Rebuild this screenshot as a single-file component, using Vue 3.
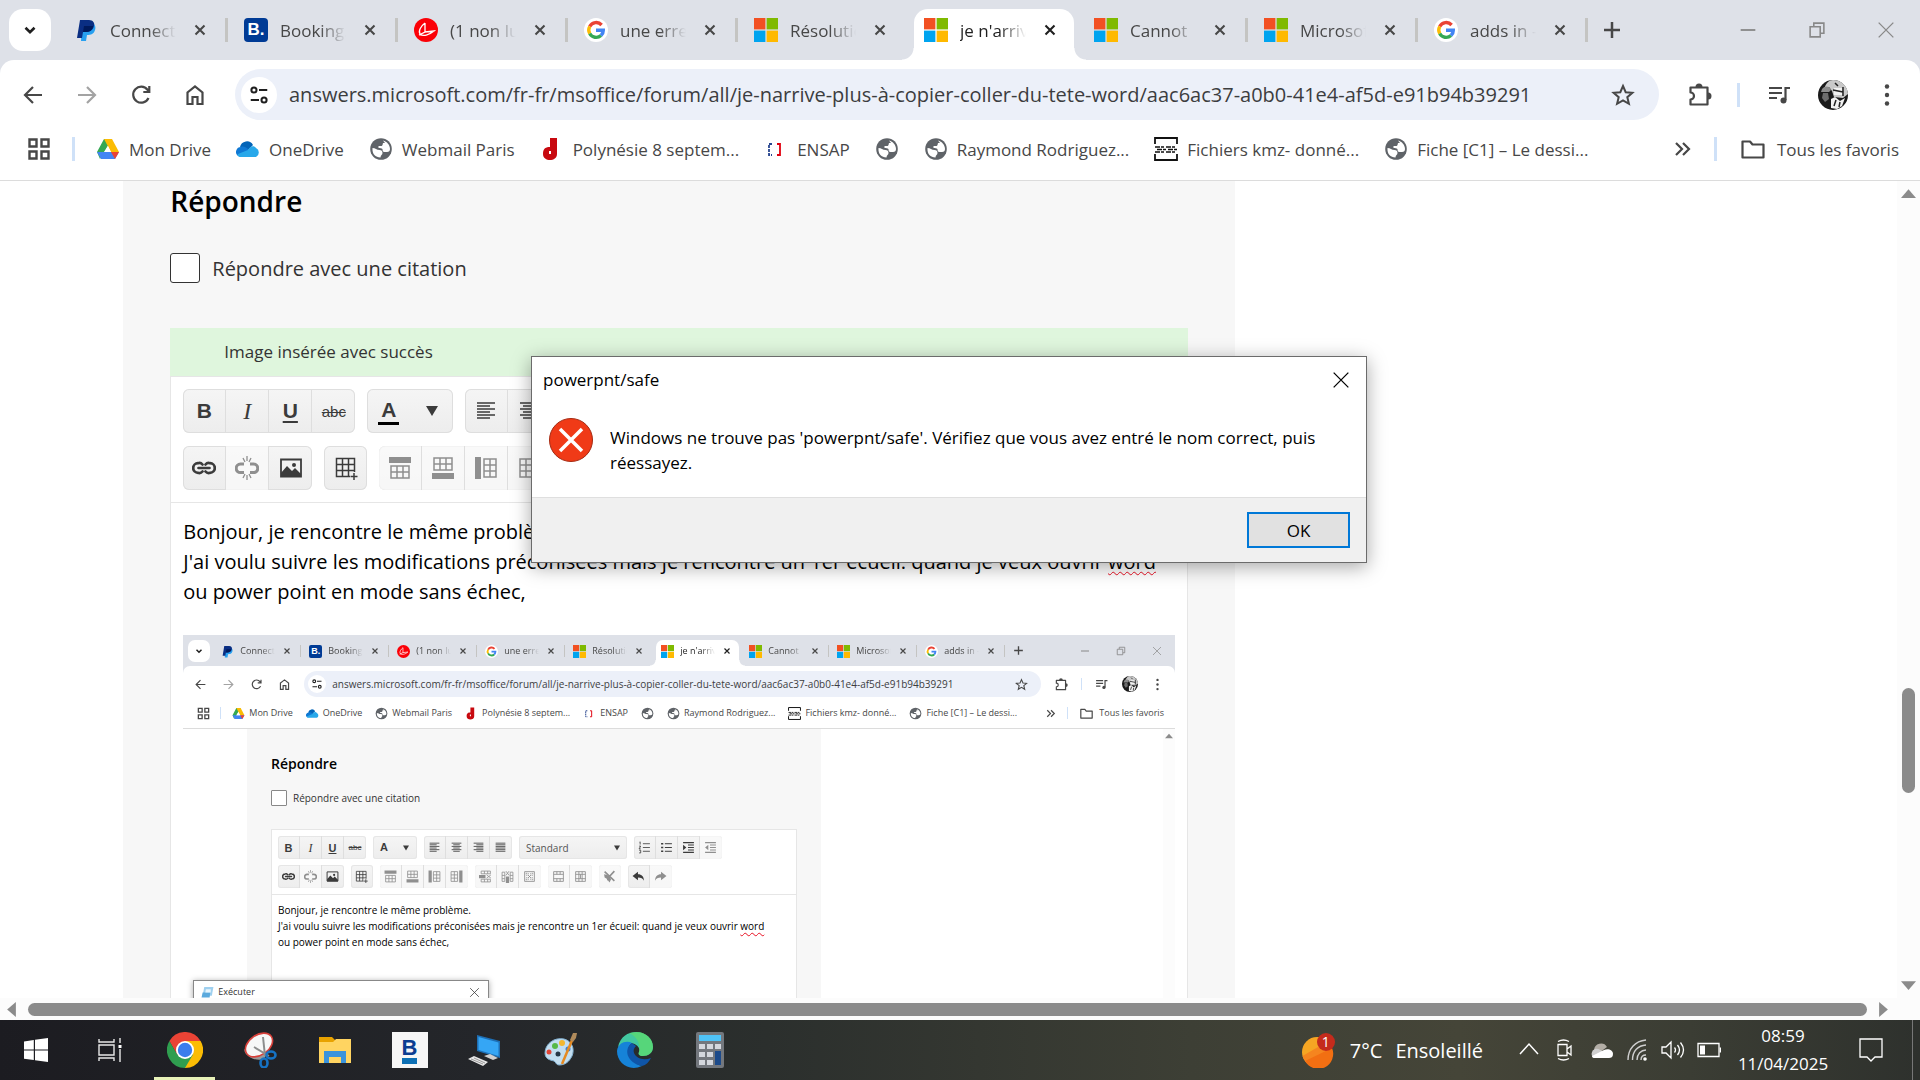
<script setup>
import { ref } from "vue";

// The picture inserted in the message is the same window, one size down.
defineOptions({ name: "App" });
defineProps({ mini: Boolean });

const url = ref(
  "answers.microsoft.com/fr-fr/msoffice/forum/all/je-narrive-plus-à-copier-coller-du-tete-word/aac6ac37-a0b0-41e4-af5d-e91b94b39291"
);
const quote = ref(false);
const style = ref("Standard");

const tabs = [
  { icon: "paypal", title: "Connect" },
  { icon: "booking", title: "Booking." },
  { icon: "red", title: "(1 non lu" },
  { icon: "google", title: "une erreu" },
  { icon: "ms", title: "Résolutio" },
  { icon: "ms", title: "je n'arrive", active: true },
  { icon: "ms", title: "Cannot " },
  { icon: "ms", title: "Microsof" },
  { icon: "google", title: "adds in -" },
];

const bookmarks = [
  { icon: "drive", title: "Mon Drive" },
  { icon: "onedrive", title: "OneDrive" },
  { icon: "globe", title: "Webmail Paris" },
  { icon: "dred", title: "Polynésie 8 septem..." },
  { icon: "ensap", title: "ENSAP" },
  { icon: "globe", title: "" },
  { icon: "globe", title: "Raymond Rodriguez..." },
  { icon: "kmz", title: "Fichiers kmz- donné..." },
  { icon: "globe", title: "Fiche [C1] – Le dessi..." },
];

const textTools = [
  { text: "B", cls: "bold", label: "Gras" },
  { text: "I", cls: "italic", label: "Italique" },
  { text: "U", cls: "under", label: "Souligné" },
  { text: "abc", cls: "strike", label: "Barré" },
];
const alignTools = ["al-left", "al-center", "al-right", "al-full"];
const listTools = [
  { icon: "ol" },
  { icon: "ul" },
  { icon: "indent" },
  { icon: "outdent", off: true },
];
const secondRow = [
  [{ icon: "link" }, { icon: "unlink", off: true }, { icon: "image" }],
  [{ icon: "table" }],
  [
    { icon: "row-top", off: true },
    { icon: "row-bottom", off: true },
    { icon: "col-left", off: true },
    { icon: "col-right", off: true },
  ],
  [
    { icon: "del-row", off: true },
    { icon: "del-col", off: true },
    { icon: "del-table", off: true },
  ],
  [{ icon: "merge", off: true }, { icon: "split", off: true }],
  [{ icon: "clean", off: true }],
  [{ icon: "undo" }, { icon: "redo", off: true }],
];

const apps = ["chrome", "snip", "explorer", "bapp", "pc", "paint", "edge", "calc"];
const tray = ["chevron", "camera", "cloud", "wifi", "volume", "battery"];
</script>

<template>
  <div class="screen" :class="{ mini }">
    <svg v-if="!mini" class="sprite" aria-hidden="true">
      <symbol id="down" viewBox="0 0 24 24"><path d="M6 9l6 6 6-6" fill="none" stroke="currentColor" stroke-width="3.5" /></symbol>
      <symbol id="close" viewBox="0 0 24 24"><path d="M6 6l12 12M18 6L6 18" stroke="currentColor" stroke-width="2.8" /></symbol>
      <symbol id="plus" viewBox="0 0 24 24"><path d="M12 4v16M4 12h16" stroke="currentColor" stroke-width="2.5" /></symbol>
      <symbol id="win-min" viewBox="0 0 24 24"><path d="M4 12h16" stroke="currentColor" stroke-width="2" /></symbol>
      <symbol id="win-max" viewBox="0 0 24 24"><path d="M4.5 8.5h11v11h-11zM8.5 8V4.5h11v11H16" fill="none" stroke="currentColor" stroke-width="1.7" /></symbol>
      <symbol id="win-close" viewBox="0 0 24 24"><path d="M4 4l16 16M20 4L4 20" stroke="currentColor" stroke-width="1.4" /></symbol>
      <symbol id="back" viewBox="0 0 24 24"><path d="M21 12H4M12 4l-8 8 8 8" fill="none" stroke="currentColor" stroke-width="2.2" /></symbol>
      <symbol id="forward" viewBox="0 0 24 24"><path d="M3 12h17M12 4l8 8-8 8" fill="none" stroke="currentColor" stroke-width="2.2" /></symbol>
      <symbol id="reload" viewBox="0 0 24 24"><path d="M19.5 15a8 8 0 1 1-1-8.300L20 8.500M20.3 3v6h-6" fill="none" stroke="currentColor" stroke-width="2.2" /></symbol>
      <symbol id="home" viewBox="0 0 24 24"><path d="M4.5 21V9.500L12 3.500l7.500 6V21h-5v-7h-5v7z" fill="none" stroke="currentColor" stroke-width="2.2" /></symbol>
      <symbol id="tune" viewBox="0 0 24 24"><g fill="none" stroke="currentColor" stroke-width="2.2"><circle cx="6.5" cy="6.5" r="2.8" /><path d="M12 6.5h9M3 17.5h9" /><circle cx="17.5" cy="17.5" r="2.8" /></g></symbol>
      <symbol id="star" viewBox="0 0 24 24"><path d="M12 3l2.7 6.200 6.700.6-5.100 4.400 1.600 6.600-5.900-3.500-5.900 3.500 1.600-6.600-5.100-4.400 6.700-.6z" fill="none" stroke="currentColor" stroke-width="2" /></symbol>
      <symbol id="ext" viewBox="0 0 24 24"><path d="M2.500 4.500h17v17h-17v-5a3.500 3.500 0 0 0 0-7z" fill="none" stroke="currentColor" stroke-width="2.200" stroke-linejoin="round" /><path d="M7.500 4a3.500 3.500 0 0 1 7 0zM20 9.500a3.500 3.500 0 0 1 0 7z" fill="currentColor" /></symbol>
      <symbol id="media" viewBox="0 0 24 24"><path d="M2 5h13M2 10h13M2 15h8M18.500 17V5H23" fill="none" stroke="currentColor" stroke-width="2.200" /><circle cx="16.500" cy="17.500" r="3" fill="currentColor" /></symbol>
      <symbol id="avatar" viewBox="0 0 30 30">
        <circle cx="15" cy="15" r="15" fill="#1a1a1a" />
        <path d="M15 0a15 15 0 0 1 15 14l-5 4-9-1-2-6-3-4-5 2C8 3 11 0 15 0z" fill="#c9c9c9" />
        <path d="M4 9c3-4 8-3 9 1l-2 2H3z" fill="#8c8c8c" /><path d="M5 13h5l1 6-4 3-3-4z" fill="#6d6d6d" />
        <path d="M16 8h8v7h-8zM13 19l4-2 5 4 5-3-3 8-5 3-6-1z" fill="#f2f2f2" /><path d="M17 3l3 3M25 7v9M18 20l-2 6M22 22l-1 5M15 10l10 2" stroke="#222" stroke-width="1.5" />
      </symbol>
      <symbol id="dots" viewBox="0 0 24 24"><g fill="currentColor"><circle cx="12" cy="3.5" r="2.2" /><circle cx="12" cy="12" r="2.2" /><circle cx="12" cy="20.5" r="2.2" /></g></symbol>
      <symbol id="grid" viewBox="0 0 24 24"><path d="M2.5 2.5h7v7h-7zM14.5 2.5h7v7h-7zM2.5 14.5h7v7h-7zM14.5 14.5h7v7h-7z" fill="none" stroke="currentColor" stroke-width="2.4" /></symbol>
      <symbol id="more" viewBox="0 0 24 24"><path d="M6 6l6 6-6 6M13 6l6 6-6 6" fill="none" stroke="currentColor" stroke-width="2.2" /></symbol>
      <symbol id="folder" viewBox="0 0 24 24"><path d="M1.5 4.5h7.500l2.500 3h11v13h-21z" fill="none" stroke="currentColor" stroke-width="2.2" stroke-linejoin="round" /></symbol>

      <symbol id="paypal" viewBox="0 0 24 24"><path d="M8 5h10c3 1 4 4 3 7-1 4-4 5-8 5l-1 6H7z" fill="#27a0f0" /><path d="M6 2h9c4 0 6 3 5 6-1 4-4 6-8 6H9l-1 6H3z" fill="#0a2e83" /><path d="M10 8h9c0 3-3 6-7 6H9z" fill="#001a5c" /></symbol>
      <symbol id="red" viewBox="0 0 24 24"><circle cx="12" cy="12" r="12" fill="#fb0007" /><path d="M11 5v9l-6 3M11 5c-4 3-7 8-5 11 3 3 9 1 14-3l-9 1" fill="none" stroke="#fff" stroke-width="1.3" /></symbol>
      <symbol id="google" viewBox="0 0 24 24">
        <circle cx="12" cy="12" r="12" fill="#fff" />
        <g fill="none" stroke-width="3.4"><path d="M17.6 7A7.300 7.300 0 0 0 5.700 8.500" stroke="#ea4335" /><path d="M5.7 8.500a7.300 7.300 0 0 0 0 7" stroke="#fbbc05" /><path d="M5.7 15.500a7.300 7.300 0 0 0 11.300 2" stroke="#34a853" /><path d="M17 17.5a7 7 0 0 0 2.300-5.300H12" stroke="#4285f4" /></g>
      </symbol>
      <symbol id="ms" viewBox="0 0 24 24"><path d="M0 0h11.4v11.400H0z" fill="#f25022" /><path d="M12.6 0H24v11.400H12.600z" fill="#7fba00" /><path d="M0 12.6h11.400V24H0z" fill="#00a4ef" /><path d="M12.6 12.600H24V24H12.600z" fill="#ffb900" /></symbol>
      <symbol id="drive" viewBox="0 0 24 24"><path d="M8 2h8l-8 13-4 7-3-7z" fill="#34a853" /><path d="M8 2h8l7 13h-8z" fill="#fbbc04" /><path d="M1 15l4 7h14l4-7z" fill="#4285f4" /><path d="M15 15h8l-4 7z" fill="#ea4335" /><path d="M12 9l3 6H8.500z" fill="#fff" /></symbol>
      <symbol id="onedrive" viewBox="0 0 24 24"><path d="M4 10a7 7 0 0 1 13-2l-6 6z" fill="#0364b8" /><path d="M2 19a5 5 0 0 1 3-9c2-1 5 0 7 2l5 6z" fill="#0f78d4" /><path d="M12 13c2-4 6-5 8-2a5 5 0 0 1 0 9H5c-3 0-4-2-3-3z" fill="#28a8ea" /></symbol>
      <symbol id="globe" viewBox="0 0 24 24"><circle cx="12" cy="12" r="10.8" fill="#5f6368" /><path d="M14 3.500c4 1 7 4.500 7 8.500 0 2-1 3-3 3h-2.500c-2 0-2-1.500-2-3-1-1-2.500-1-4-1V9h2.500c2 0 1.500-2 2-3h2zM3.500 11c3 0 4 2 7 2 2 0 3 1 3 3 0 2-2 2-2 4.500C6.500 20.500 3 17 3.500 11z" fill="#fff" /></symbol>
      <symbol id="dred" viewBox="0 0 24 24"><path d="M10 1h7v16c0 8-14 8-14 0 0-6 3-7 7-7z" fill="#c8090f" /><path d="M10 14v3" stroke="#fff" stroke-width="2" /></symbol>
      <symbol id="ensap" viewBox="0 0 24 24"><path d="M8 7H5v11h3" fill="none" stroke="#27458f" stroke-width="1.800" stroke-dasharray="3 1" /><path d="M13 7h3v11h-3" fill="none" stroke="#e1000f" stroke-width="1.800" /></symbol>
      <symbol id="kmz" viewBox="0 0 24 24"><path d="M1 7V1h22v6M1 17v6h22v-6" fill="none" stroke="#111" stroke-width="1.800" /><path d="M1 10h22M3 12.500h20M1 15h22" stroke="#111" stroke-width="1.600" stroke-dasharray="5 1 3 2" /></symbol>

      <symbol id="al-left" viewBox="0 0 24 24"><path d="M3 4h18M3 7h13M3 10h18M3 13h13M3 16h18M3 19h13" stroke="currentColor" stroke-width="1.5" /></symbol>
      <symbol id="al-center" viewBox="0 0 24 24"><path d="M3 4h18M6 7h12M3 10h18M6 13h12M3 16h18M6 19h12" stroke="currentColor" stroke-width="1.5" /></symbol>
      <symbol id="al-right" viewBox="0 0 24 24"><path d="M3 4h18M8 7h13M3 10h18M8 13h13M3 16h18M8 19h13" stroke="currentColor" stroke-width="1.5" /></symbol>
      <symbol id="al-full" viewBox="0 0 24 24"><path d="M3 4h18M3 7h18M3 10h18M3 13h18M3 16h18M3 19h18" stroke="currentColor" stroke-width="1.5" /></symbol>
      <symbol id="ol" viewBox="0 0 24 24"><path d="M9 5h13M9 12h13M9 19h13M3 2l1-.5v5M2 9.500h3l-3 5h3M2 17h3v5H2" fill="none" stroke="currentColor" stroke-width="1.5" /></symbol>
      <symbol id="ul" viewBox="0 0 24 24"><path d="M9 5h13M9 12h13M9 19h13" stroke="currentColor" stroke-width="1.8" /><path d="M2 3.500h4v3H2zM2 10.500h4v3H2zM2 17.500h4v3H2z" fill="currentColor" /></symbol>
      <symbol id="indent" viewBox="0 0 24 24"><path d="M2 3h20M11 7.500h11M11 12h11M11 16.500h11M2 21h20" stroke="currentColor" stroke-width="2" /><path d="M2 7l6 5-6 5z" fill="currentColor" /></symbol>
      <symbol id="outdent" viewBox="0 0 24 24"><path d="M2 3h20M11 7.500h11M11 12h11M11 16.500h11M2 21h20" stroke="currentColor" stroke-width="2" /><path d="M8 7l-6 5 6 5z" fill="currentColor" /></symbol>
      <symbol id="link" viewBox="0 0 24 24"><path d="M10.5 8.500A4.200 4.200 0 0 0 6 7.200a4.800 4.800 0 0 0 0 9.600 4.200 4.200 0 0 0 4.500-1.300M13.500 8.500A4.200 4.200 0 0 1 18 7.200a4.800 4.800 0 0 1 0 9.600 4.200 4.200 0 0 1-4.500-1.300M6.500 12h11" fill="none" stroke="currentColor" stroke-width="2.700" stroke-linecap="round" /></symbol>
      <symbol id="unlink" viewBox="0 0 24 24"><path d="M9 8H5.500a4.300 4.300 0 0 0 0 8.600H9M15 8h3.500a4.300 4.300 0 0 1 0 8.600H15" fill="none" stroke="currentColor" stroke-width="3" /><path d="M12 0v5M8 2l2 4M16 2l-2 4M12 24v-5M8 22l2-4M16 22l-2-4" stroke="currentColor" stroke-width="1.3" /></symbol>
      <symbol id="image" viewBox="0 0 24 24"><path d="M2 3.500h20v17H2z" fill="none" stroke="currentColor" stroke-width="1.8" /><path d="M2 17l6-7 5 5 3-3 6 6v3H2z" fill="currentColor" /><circle cx="15" cy="9" r="2" fill="currentColor" /></symbol>
      <symbol id="table" viewBox="0 0 24 24"><path d="M2.5 2.5h18v18h-18zM8.5 2.5v18M14.5 2.5v18M2.5 8.5h18M2.5 14.5h18" fill="none" stroke="currentColor" stroke-width="1.5" /><path d="M16 16h8v8h-8z" fill="#f0f0f0" /><path d="M20 17v7M16.5 20.500h7" stroke="currentColor" stroke-width="1.5" /></symbol>
      <symbol id="row-top" viewBox="0 0 24 24"><path d="M1 1h22v6H1z" fill="currentColor" /><path d="M3 10h18v12H3zM3 16h18M9 10v12M15 10v12" fill="none" stroke="currentColor" stroke-width="1.5" /></symbol>
      <symbol id="row-bottom" viewBox="0 0 24 24"><path d="M1 17h22v6H1z" fill="currentColor" /><path d="M3 2h18v12H3zM3 8h18M9 2v12M15 2v12" fill="none" stroke="currentColor" stroke-width="1.5" /></symbol>
      <symbol id="col-left" viewBox="0 0 24 24"><path d="M1 1h6v22H1z" fill="currentColor" /><path d="M10 3h12v18H10zM16 3v18M10 9h12M10 15h12" fill="none" stroke="currentColor" stroke-width="1.5" /></symbol>
      <symbol id="col-right" viewBox="0 0 24 24"><path d="M17 1h6v22h-6z" fill="currentColor" /><path d="M2 3h12v18H2zM8 3v18M2 9h12M2 15h12" fill="none" stroke="currentColor" stroke-width="1.5" /></symbol>
      <symbol id="del-row" viewBox="0 0 24 24"><path d="M0 9h12v6H0z" fill="currentColor" /><path d="M4 2h17v5H4zM4 17h17v5H4zM10 2v5M16 2v5M10 17v5M16 17v5M14 9l8 6M22 9l-8 6" fill="none" stroke="currentColor" stroke-width="1.5" /></symbol>
      <symbol id="del-col" viewBox="0 0 24 24"><path d="M9 12h6v12H9z" fill="currentColor" /><path d="M2 4h5v17H2zM17 4h5v17h-5zM2 10h5M2 16h5M17 10h5M17 16h5M9 2l6 8M15 2l-6 8" fill="none" stroke="currentColor" stroke-width="1.5" /></symbol>
      <symbol id="del-table" viewBox="0 0 24 24"><path d="M3 3h18v18H3zM9 9l6 6M15 9l-6 6" fill="none" stroke="currentColor" stroke-width="1.6" /><path d="M7 5v14M17 5v14M5 7h14M5 17h14" stroke="currentColor" stroke-width="1.5" stroke-dasharray="2 2" /></symbol>
      <symbol id="merge" viewBox="0 0 24 24"><path d="M3 3h18v18H3zM3 8h18M3 16h18M9 3v5M15 3v5M9 16v5M15 16v5" fill="none" stroke="currentColor" stroke-width="1.6" /></symbol>
      <symbol id="split" viewBox="0 0 24 24"><path d="M3 3h18v18H3zM3 8h18M3 16h18M9 3v18M15 3v18M12 8v8" fill="none" stroke="currentColor" stroke-width="1.6" /></symbol>
      <symbol id="clean" viewBox="0 0 24 24"><path d="M2 8l6 1 4 3 3 5-3 6-3-4-1 1-1-4-4-2z" fill="currentColor" /><path d="M11 13L21 2M3 3l18 17" stroke="currentColor" stroke-width="3" /></symbol>
      <symbol id="undo" viewBox="0 0 24 24"><path d="M1 11l10-8v5c7 0 11 4 11 12-2-4-5-6-11-6v5z" fill="currentColor" /></symbol>
      <symbol id="redo" viewBox="0 0 24 24"><path d="M23 11L13 3v5C6 8 2 12 2 20c2-4 5-6 11-6v5z" fill="currentColor" /></symbol>
      <symbol id="caret" viewBox="0 0 24 24"><path d="M0 2h24L12 22z" fill="currentColor" /></symbol>
      <symbol id="arrow" viewBox="0 0 24 24"><path d="M0 5h24L12 19z" fill="currentColor" /></symbol>

      <symbol id="start" viewBox="0 0 24 24"><path d="M0 3.400l9.800-1.400v9.500H0zM11 1.800L24 0v11.500H11zM0 12.600h9.800V22L0 20.700zM11 12.600h13V24l-13-1.800z" fill="#fff" /></symbol>
      <symbol id="taskview" viewBox="0 0 24 24"><path d="M1 1v3h15V1M1 23v-3h15v3M1 7h15v10H1zM22 0v5M22 11v13" fill="none" stroke="#e8e8e8" stroke-width="1.4" /><path d="M20.5 7h3v3h-3z" fill="#fff" /></symbol>
      <symbol id="chrome" viewBox="0 0 36 36"><path d="M18 18L2.400 9A18 18 0 0 1 33.600 9z" fill="#ea4335" /><path d="M18 18l15.600-9A18 18 0 0 1 18 36z" fill="#fbbc04" /><path d="M18 9h15.600L26 22z" fill="#fbbc04" /><path d="M10 22.500L2.400 9 18 9z" fill="#ea4335" /><path d="M10.200 22.500L2.400 9A18 18 0 0 0 18 36l8-13.500z" fill="#2f9e4f" /><circle cx="18" cy="18" r="9" fill="#fff" /><circle cx="18" cy="18" r="7.200" fill="#3b7ded" /></symbol>
      <symbol id="snip" viewBox="0 0 36 36"><ellipse cx="13" cy="21" rx="11" ry="6" fill="#9a9a9a" transform="rotate(20 13 21)" /><ellipse cx="17" cy="13" rx="15" ry="10" fill="#f7f7f7" stroke="#d8403a" stroke-width="1.6" transform="rotate(-35 17 13)" /><path d="M21 5l2 19M12 15l15 9" stroke="#8d8d8d" stroke-width="2" /><g fill="none" stroke="#1673c5" stroke-width="2.6"><ellipse cx="29" cy="23" rx="4.500" ry="3.500" /><ellipse cx="22" cy="31" rx="3.500" ry="4.500" /></g></symbol>
      <symbol id="explorer" viewBox="0 0 36 36"><path d="M2 5h13l3 3v6H2z" fill="#e8a200" /><path d="M2 10h14l3-3h15v24H2z" fill="#ffd461" /><path d="M7 31V19h22v12h-5v-6H12v6z" fill="#3a93dc" /></symbol>
      <symbol id="pc" viewBox="0 0 36 36"><path d="M10 3l23 6v17l-23-7z" fill="#1e6fb5" /><path d="M11.5 5l20 5.500v13.500l-20-6z" fill="#35a6f5" /><path d="M17 24l6-2 8 4-5 2z" fill="#cfcfcf" /><path d="M1 27l6-3 14 6-5 4z" fill="#e8e8e8" /><path d="M4 27l12 5M7 26l11 5" stroke="#999" /></symbol>
      <symbol id="paint" viewBox="0 0 36 36"><path d="M3 21C3 12 12 5 22 7c8 2 11 10 8 17-3 6-7 9-13 9-3 0-3-3-5-4-4-1-9-2-9-8z" fill="#c3def0" stroke="#84b3d4" /><circle cx="13" cy="14" r="3" fill="#56b947" /><circle cx="20" cy="11" r="3" fill="#f3b72f" /><circle cx="7" cy="20" r="2.5" fill="#e24536" /><circle cx="26" cy="17" r="2.5" fill="#3a7fd0" /><circle cx="16" cy="22" r="2.5" fill="#263746" /><path d="M31 6L20 32" stroke="#e58a22" stroke-width="2.5" /><path d="M28 8l3-7h4l-1 5-3 4z" fill="#b08b5b" /></symbol>
      <symbol id="edge" viewBox="0 0 36 36"><path d="M1 15C3 5 11 0 19 0c10 0 17 7 17 15 0 6-5 9-10 9-4 0-5-2-4-4 3-6-9-14-21-5z" fill="#42c8a0" /><path d="M20 0c9 0 16 7 16 15 0 6-5 9-10 9-4 0-5-2-4-4 2-9-3-16-10-19z" fill="#5fdc6a" opacity=".7" /><path d="M0 19C1 11 9 8 15 11c-4 3-5 8-2 14 3 5 8 8 12 9C12 40 0 31 0 19z" fill="#1683d8" /><path d="M15 11c-9 6-5 20 10 23 4-1 7-4 9-8-8 3-15 0-17-5-1-3 0-5 2-7z" fill="#0f55a8" /></symbol>
      <symbol id="calc" viewBox="0 0 36 36"><rect x="4" width="28" height="36" rx="2" fill="#73777d" /><path d="M7 3h22v6H7z" fill="#4fc3f7" /><path d="M7 12h6v5H7zM15 12h6v5h-6zM23 12h6v5h-6zM7 20h6v5H7zM15 20h6v5h-6zM7 28h6v5H7zM15 28h6v5h-6z" fill="#d4d7dd" /><path d="M23 19h6v14h-6z" fill="#1c4a8a" /></symbol>

      <symbol id="sun" viewBox="0 0 36 36"><circle cx="16" cy="20" r="15" fill="#f6a623" /><path d="M1.5 24L26.500 9.500a15 15 0 0 1-4 24A15 15 0 0 1 1.500 24z" fill="#f5851f" /><path d="M4 29l27-13a15 15 0 0 1-27 13z" fill="#f26f12" /></symbol>
      <symbol id="chevron" viewBox="0 0 24 24"><path d="M3 16l9-10 9 10" fill="none" stroke="#fff" stroke-width="1.5" /></symbol>
      <symbol id="camera" viewBox="0 0 24 24"><path d="M5 6.500h9v11H5zM14 11l4-3v9l-4-3M5 3.500q5.500-3 11 0M5 20.500q5.500 3 11 0" fill="none" stroke="#fff" stroke-width="1.3" /></symbol>
      <symbol id="cloud" viewBox="0 0 24 24"><path d="M5 12a7 7 0 0 1 13-3l-8 6z" fill="#b3aea6" /><path d="M5 20a5 5 0 0 1 1-9c3-1 6 1 9 4l3 5z" fill="#cfcfcf" /><path d="M3 18l12-6c4-2 9 0 9 4 0 3-2 4-4 4H5c-1 0-2-1-2-2z" fill="#fff" /></symbol>
      <symbol id="wifi" viewBox="0 0 24 24"><g fill="none" stroke="#cfcfcf" stroke-width="1.4"><path d="M3 22C3 11 10 3 21 2" /><path d="M7.5 22C7.500 13 13 7.500 21 7" /><path d="M12 22c0-6 4-10 9-10" /><path d="M16 22c0-3 2-5 5-5" /></g><circle cx="20" cy="21" r="1.8" fill="#fff" /></symbol>
      <symbol id="volume" viewBox="0 0 24 24"><path d="M1 9h4l5-5v16l-5-5H1zM13.500 9.500q2 2.500 0 5M16.500 7q4 5 0 10M19.500 4.500q6 7.500 0 15" fill="none" stroke="#fff" stroke-width="1.3" /></symbol>
      <symbol id="battery" viewBox="0 0 24 24"><path d="M1 5.500h21v13H1zM23.500 9.500v5" fill="none" stroke="#fff" stroke-width="1.3" /><path d="M3 7.500h5v9H3z" fill="#fff" /></symbol>
      <symbol id="notif" viewBox="0 0 24 24"><path d="M1 1h22v18h-7l-4 4-4-4H1z" fill="none" stroke="#fff" stroke-width="1.3" /></symbol>
      <symbol id="run" viewBox="0 0 24 24"><path d="M6 2h17l-3 16H3z" fill="#9fd0ef" /><path d="M3 12h14l-1 9H1z" fill="#5aa9dd" /><path d="M9 6h9v6H8z" fill="#e7f5fd" /></symbol>
    </svg>

    <header class="browser">
      <div class="strip">
        <button class="tab-search" aria-label="Rechercher dans les onglets"><svg><use href="#down" /></svg></button>
        <nav class="tabs">
          <div v-for="(t, i) in tabs" :key="i" class="tab" :class="{ active: t.active, nosep: i === 4 }">
            <span v-if="t.icon === 'booking'" class="fav booking">B.</span>
            <svg v-else class="fav"><use :href="'#' + t.icon" /></svg>
            <span class="tab-title">{{ t.title }}</span>
            <button class="tab-close" aria-label="Fermer"><svg><use href="#close" /></svg></button>
          </div>
        </nav>
        <button class="new-tab" aria-label="Nouvel onglet"><svg><use href="#plus" /></svg></button>
        <div class="win-controls">
          <button v-for="c in ['win-min', 'win-max', 'win-close']" :key="c" :aria-label="c">
            <svg><use :href="'#' + c" /></svg>
          </button>
        </div>
      </div>

      <div class="nav-bar">
        <button v-for="n in ['back', 'forward', 'reload', 'home']" :key="n" class="nav-btn" :class="n" :aria-label="n">
          <svg><use :href="'#' + n" /></svg>
        </button>
        <div class="omnibox">
          <button class="site-info" aria-label="Informations sur le site"><svg><use href="#tune" /></svg></button>
          <input v-model="url" class="url" aria-label="Adresse" />
          <button class="star" aria-label="Favori"><svg><use href="#star" /></svg></button>
        </div>
        <button class="nav-btn ext" aria-label="Extensions"><svg><use href="#ext" /></svg></button>
        <i class="bar"></i>
        <button class="nav-btn" aria-label="Média"><svg><use href="#media" /></svg></button>
        <button class="nav-btn avatar" aria-label="Profil"><svg><use href="#avatar" /></svg></button>
        <button class="nav-btn" aria-label="Menu"><svg><use href="#dots" /></svg></button>
      </div>

      <div class="favorites">
        <button class="apps-btn" aria-label="Applications"><svg><use href="#grid" /></svg></button>
        <i class="bar"></i>
        <nav class="links">
          <a v-for="(b, i) in bookmarks" :key="i" href="#">
            <svg><use :href="'#' + b.icon" /></svg>
            <span v-if="b.title">{{ b.title }}</span>
          </a>
        </nav>
        <button class="more" aria-label="Plus"><svg><use href="#more" /></svg></button>
        <i class="bar"></i>
        <a class="all" href="#"><svg><use href="#folder" /></svg><span>Tous les favoris</span></a>
      </div>
    </header>

    <div class="viewport">
      <main class="page">
        <section class="reply">
          <h2>Répondre</h2>
          <label class="quote"><input v-model="quote" type="checkbox" />Répondre avec une citation</label>
          <p v-if="!mini" class="notice">Image insérée avec succès</p>
          <div class="editor">
            <div class="tools">
              <div class="row">
                <div class="group">
                  <button v-for="t in textTools" :key="t.text" :aria-label="t.label"><span :class="t.cls">{{ t.text }}</span></button>
                </div>
                <div class="group">
                  <button class="flat"><span class="color">A</span></button>
                  <button class="flat" aria-label="Couleur"><svg class="caret"><use href="#caret" /></svg></button>
                </div>
                <div class="group">
                  <button v-for="a in alignTools" :key="a" :aria-label="a"><svg><use :href="'#' + a" /></svg></button>
                </div>
                <div class="group select">
                  <select v-model="style" aria-label="Style">
                    <option>Standard</option>
                  </select>
                  <svg class="caret"><use href="#caret" /></svg>
                </div>
                <div class="group">
                  <button v-for="l in listTools" :key="l.icon" :disabled="l.off" :aria-label="l.icon"><svg><use :href="'#' + l.icon" /></svg></button>
                </div>
              </div>
              <div class="row">
                <div v-for="(g, i) in secondRow" :key="i" class="group">
                  <button v-for="l in g" :key="l.icon" :disabled="l.off" :aria-label="l.icon"><svg><use :href="'#' + l.icon" /></svg></button>
                </div>
              </div>
            </div>
            <div class="message">
              <p>
                Bonjour, je rencontre le même problème.<br />
                J'ai voulu suivre les modifications préconisées mais je rencontre un 1er écueil: quand je veux ouvrir <span class="typo">word</span><br />
                ou power point en mode sans échec,
              </p>
              <App v-if="!mini" mini />
            </div>
          </div>
        </section>
      </main>
      <div class="vscroll">
        <svg class="arrow"><use href="#arrow" /></svg>
        <i v-if="!mini" class="thumb"></i>
        <svg v-if="!mini" class="arrow"><use href="#arrow" /></svg>
      </div>
    </div>

    <div v-if="mini" class="run-box">
      <svg><use href="#run" /></svg>
      <span>Exécuter</span>
      <button aria-label="Fermer"><svg><use href="#win-close" /></svg></button>
    </div>

    <template v-else>
      <div class="hscroll">
        <svg class="arrow left"><use href="#arrow" /></svg>
        <i class="thumb"></i>
        <svg class="arrow right"><use href="#arrow" /></svg>
      </div>

      <footer class="taskbar">
        <button class="task start" aria-label="Démarrer"><svg><use href="#start" /></svg></button>
        <button class="task small" aria-label="Affichage des tâches"><svg><use href="#taskview" /></svg></button>
        <button v-for="a in apps" :key="a" class="task" :class="{ running: a === 'chrome' }" :aria-label="a">
          <span v-if="a === 'bapp'" class="bapp">B</span>
          <svg v-else><use :href="'#' + a" /></svg>
        </button>
        <div class="weather">
          <div class="sun"><svg><use href="#sun" /></svg><b>1</b></div>
          <span>7°C</span>
          <span>Ensoleillé</span>
        </div>
        <div class="tray">
          <button v-for="t in tray" :key="t" :aria-label="t"><svg><use :href="'#' + t" /></svg></button>
        </div>
        <div class="clock"><span>08:59</span><span>11/04/2025</span></div>
        <button class="notif" aria-label="Notifications"><svg><use href="#notif" /></svg></button>
      </footer>

      <div class="dialog" role="alertdialog" aria-label="powerpnt/safe">
        <div class="dialog-title">
          <span>powerpnt/safe</span>
          <button aria-label="Fermer"><svg><use href="#win-close" /></svg></button>
        </div>
        <div class="dialog-body">
          <svg viewBox="0 0 44 44">
            <circle cx="22" cy="22" r="21.5" fill="#f03a17" stroke="#a52a12" />
            <path d="M11 11l22 22M33 11L11 33" stroke="#fff" stroke-width="3.5" />
          </svg>
          <p>Windows ne trouve pas 'powerpnt/safe'. Vérifiez que vous avez entré le nom correct, puis réessayez.</p>
        </div>
        <div class="dialog-foot"><button>OK</button></div>
      </div>
    </template>
  </div>
</template>

<style>
body {
  margin: 0;
  overflow: hidden;
}
</style>

<style scoped>
.screen {
  --strip: 60px;
  --round: 42px;
  --tab: 170px;
  --tab-pad: 16px;
  --fav: 24px;
  --gap: 12px;
  --glyph: 18px;
  --nav: 54px;
  --nav-icon: 24px;
  --box: 51px;
  --info: 36px;
  --fs: 17px;
  --fs-url: 20px;
  --link-gap: 25px;
  --link-icon-gap: 9px;
  --bar: 3px;
  --bar-h: 24px;
  --radius: 14px;
  --foot: 12px;
  --head: 28px;
  --head-lh: 40px;
  --page-top: 0px;
  --check: 30px;
  --fs-label: 20px;
  --inset: 47px;
  --btn: 43px;
  --btn-h: 44px;
  --btn-icon: 24px;
  --fs-msg: 20px;
  --lh-msg: 30px;
  --scroll: 23px;
  position: relative;
  display: flex;
  flex-direction: column;
  height: 100vh;
  overflow: hidden;
  background: #fff;
  color: #000;
  font-family: "Open Sans", "Noto Sans", sans-serif;
  font-size: var(--fs);
}
.screen.mini {
  --strip: 31px;
  --round: 22px;
  --tab: 88px;
  --tab-pad: 8px;
  --fav: 13px;
  --gap: 6px;
  --glyph: 10px;
  --nav: 28px;
  --nav-icon: 13px;
  --box: 26px;
  --info: 18px;
  --fs: 9px;
  --fs-url: 10px;
  --link-gap: 13px;
  --link-icon-gap: 4px;
  --bar: 1px;
  --bar-h: 12px;
  --radius: 7px;
  --foot: 6px;
  --head: 14px;
  --head-lh: 20px;
  --page-top: 25px;
  --check: 16px;
  --fs-label: 10px;
  --inset: 24px;
  --btn: 22px;
  --btn-h: 23px;
  --btn-icon: 13px;
  --fs-msg: 10px;
  --lh-msg: 16px;
  --scroll: 12px;
  height: 558px;
}
.sprite {
  position: absolute;
  width: 0;
  height: 0;
}
* {
  box-sizing: border-box;
}
button {
  display: flex;
  align-items: center;
  justify-content: center;
  flex: none;
  padding: 0;
  border: 0;
  background: none;
  color: inherit;
  font: inherit;
}
svg {
  display: block;
  flex: none;
  width: var(--nav-icon);
  height: var(--nav-icon);
}
a {
  color: inherit;
  text-decoration: none;
}

/* tab strip */
.browser {
  flex: none;
  color: #474747;
  border-bottom: 1px solid #dcdcdc;
  background: #dee1e8;
}
.strip {
  display: flex;
  align-items: center;
  height: var(--strip);
  padding-left: 9px;
}
.mini .strip {
  padding-left: 5px;
}
.tab-search {
  width: var(--round);
  height: var(--round);
  border-radius: var(--radius);
  background: #fff;
  color: #1f1f1f;
}
.tab-search svg,
.tab-close svg {
  width: var(--glyph);
  height: var(--glyph);
}
.tabs {
  display: flex;
  align-self: stretch;
  align-items: flex-end;
  margin-left: 7px;
}
.mini .tabs {
  margin-left: 3px;
}
.tab {
  position: relative;
  display: flex;
  align-items: center;
  width: var(--tab);
  height: var(--box);
  padding: 0 var(--tab-pad) 9px;
}
.mini .tab {
  padding-bottom: 4px;
}
.tab::after {
  content: "";
  position: absolute;
  right: 0;
  width: var(--bar);
  height: var(--bar-h);
  background: #c4c4c2;
}
.tab.nosep::after {
  display: none;
}
.tab.active {
  isolation: isolate;
  color: #1f1f1f;
}
.tab.active::before {
  content: "";
  position: absolute;
  z-index: -1;
  inset: 0 4px 0 6px;
  border-radius: var(--radius) var(--radius) 0 0;
  background: #fff;
}
.mini .tab.active::before {
  inset: 0 2px 0 3px;
}
/* rounded feet that join the tab to the toolbar */
.tab.active::after {
  z-index: -1;
  right: calc(4px - var(--foot));
  bottom: 0;
  left: calc(6px - var(--foot));
  width: auto;
  height: var(--foot);
  background: radial-gradient(circle at 0 0, transparent calc(var(--foot) - 1px), #fff var(--foot)) left / var(--foot) 100% no-repeat,
    radial-gradient(circle at 100% 0, transparent calc(var(--foot) - 1px), #fff var(--foot)) right / var(--foot) 100% no-repeat;
}
.mini .tab.active::after {
  right: calc(2px - var(--foot));
  left: calc(3px - var(--foot));
}
.fav {
  flex: none;
  width: var(--fav);
  height: var(--fav);
}
.booking {
  border-radius: 4px;
  background: #003b95;
  color: #fff;
  font-family: "Liberation Sans", sans-serif;
  font-size: var(--fs);
  font-weight: 700;
  line-height: var(--fav);
  text-align: center;
}
.mini .booking {
  border-radius: 2px;
}
.tab-title {
  flex: 1;
  margin-left: var(--gap);
  margin-right: var(--gap);
  overflow: hidden;
  white-space: nowrap;
  mask-image: linear-gradient(90deg, #000 60%, transparent);
}
.tab-close {
  width: 24px;
}
.mini .tab-close {
  width: 12px;
}
.new-tab {
  width: 48px;
}
.mini .new-tab {
  width: 26px;
}
.win-controls {
  display: flex;
  margin-left: auto;
  color: #888;
}
.win-controls button {
  width: 69px;
}
.win-controls svg {
  width: 22px;
  height: 22px;
}
.mini .win-controls button {
  width: 36px;
}
.mini .win-controls svg {
  width: 12px;
  height: 12px;
}

/* address bar */
.nav-bar {
  display: flex;
  align-items: center;
  height: 69px;
  padding: 0 6px;
  border-radius: var(--radius) var(--radius) 0 0;
  background: #fff;
}
.mini .nav-bar {
  height: 36px;
  padding: 0 3px;
}
.nav-btn {
  width: var(--nav);
}
.nav-btn.forward {
  color: #a3a3a3;
}
.nav-btn.ext {
  margin-right: 10px;
}
.nav-btn.avatar svg {
  width: 30px;
  height: 30px;
}
.mini .nav-btn.avatar svg {
  width: 16px;
  height: 16px;
}
.omnibox {
  display: flex;
  flex: 1;
  align-items: center;
  height: var(--box);
  margin: 0 14px 0 13px;
  padding: 0 9px 0 6px;
  border-radius: 26px;
  background: #ecf0f9;
}
.mini .omnibox {
  margin: 0 7px 0 6px;
  padding: 0 5px 0 4px;
}
.site-info {
  width: var(--info);
  height: var(--info);
  border-radius: 50%;
  background: #fff;
  color: #1f1f1f;
}
.site-info svg {
  width: 22px;
  height: 22px;
}
.mini .site-info svg {
  width: 12px;
  height: 12px;
}
.url {
  flex: 1;
  min-width: 0;
  margin-left: var(--gap);
  padding: 0;
  border: 0;
  background: none;
  color: #3c3d3f;
  font: inherit;
  font-size: var(--fs-url);
  outline: none;
}
.star {
  width: var(--nav);
}
.bar {
  flex: none;
  width: var(--bar);
  height: var(--bar-h);
  margin-right: 12px;
  background: #cfe1f8;
}
.mini .bar {
  margin-right: 6px;
}
.mini .nav-btn.ext {
  margin-right: 5px;
}

/* favourites */
.favorites {
  display: flex;
  align-items: center;
  height: 51px;
  padding: 0 21px 11px 27px;
  background: #fff;
}
.mini .favorites {
  height: 26px;
  padding: 0 11px 4px 14px;
}
.apps-btn {
  margin-right: 21px;
}
.favorites > .bar:nth-of-type(1) {
  margin-right: 21px;
}
.mini .apps-btn {
  margin-right: 10px;
}
.mini .favorites > .bar:nth-of-type(1) {
  margin-right: 11px;
}
.links {
  display: flex;
  flex: 1;
  gap: var(--link-gap);
}
.links a,
.all {
  display: flex;
  align-items: center;
  gap: var(--link-icon-gap);
  white-space: nowrap;
}
.more {
  margin-right: 20px;
}
.favorites > .bar:nth-of-type(2) {
  margin-right: 24px;
}
.mini .more {
  margin-right: 10px;
}
.all {
  gap: 12px;
}
.mini .favorites > .bar:nth-of-type(2) {
  margin-right: 12px;
}
.mini .all {
  gap: 6px;
}

/* page */
.viewport {
  display: flex;
  flex: 1;
  min-height: 0;
  overflow: hidden;
}
.page {
  flex: 1;
  min-width: 0;
}
.reply {
  width: 58.6%;
  min-height: 100%;
  margin-left: 6.5%;
  padding: var(--page-top) var(--inset) 0;
  background: #f7f7f7;
}
.reply h2 {
  margin: 0;
  font-size: var(--head);
  font-weight: 600;
  line-height: var(--head-lh);
}
.quote {
  display: flex;
  align-items: center;
  gap: var(--gap);
  height: var(--check);
  margin: 32px 0 45px;
  color: #333;
  font-size: var(--fs-label);
}
.mini .quote {
  margin: 16px 0 23px;
}
.quote input {
  appearance: none;
  width: var(--check);
  height: var(--check);
  margin: 0;
  border: 1px solid #333;
  border-radius: 3px;
  background: #fff;
}
.mini .quote input {
  border-color: #888;
  border-radius: 1px;
}
.notice {
  margin: 0;
  padding-left: 54px;
  background: #dff6dd;
  color: #333;
  line-height: 48px;
}
.editor {
  border: 1px solid #e6e6e6;
  background: #fff;
}
.tools {
  display: grid;
  gap: 13px;
  padding: 12px;
  border-bottom: 1px solid #e6e6e6;
}
.mini .tools {
  gap: 6px;
  padding: 6px;
}
.row {
  display: flex;
  gap: var(--gap);
}
.mini .row {
  gap: 7px;
}
.group {
  position: relative;
  display: flex;
  flex: none;
  height: var(--btn-h);
  overflow: hidden;
  border-radius: 6px;
  box-shadow: inset 0 0 0 1px #dedede;
  background: linear-gradient(#f5f5f5, #ededed);
  color: #3b3b3b;
}
.mini .group {
  border-radius: 3px;
  box-shadow: inset 0 0 0 1px #e6e6e6;
}
.group button {
  width: var(--btn);
  border-right: 1px solid #dedede;
}
.group button:last-child,
.group .flat {
  border-right: 0;
}
.group button:disabled {
  background: #fafafac0;
  color: #8f8f8f;
}
.group svg {
  width: var(--btn-icon);
  height: var(--btn-icon);
}
.group .caret {
  width: 12px;
  height: 12px;
}
.mini .group .caret {
  width: 6px;
  height: 6px;
}
.bold,
.under,
.color {
  font-family: "Liberation Sans", sans-serif;
  font-size: 21px;
  font-weight: 700;
}
.italic {
  font-family: "Liberation Serif", serif;
  font-size: 24px;
  font-style: italic;
}
.under {
  text-decoration: underline;
  text-underline-offset: 3px;
}
.strike {
  font-family: "Liberation Sans", sans-serif;
  font-size: 15px;
  text-decoration: line-through;
}
.color {
  padding: 0 3px;
  border-bottom: 3px solid #000;
}
.mini .bold,
.mini .under,
.mini .color {
  font-size: 11px;
}
.mini .italic {
  font-size: 12px;
}
.mini .under {
  text-underline-offset: 1px;
}
.mini .strike {
  font-size: 8px;
}
.mini .color {
  padding: 0 2px;
  border-bottom-width: 2px;
}
.select {
  align-items: center;
  width: 209px;
  padding: 0 14px;
}
.mini .select {
  width: 108px;
  padding: 0 7px;
}
.select select {
  flex: 1;
  appearance: none;
  padding: 0;
  border: 0;
  background: none;
  color: #555;
  font: inherit;
  font-size: var(--fs-label);
}
.message {
  padding: 14px 12px 0;
  font-size: var(--fs-msg);
  line-height: var(--lh-msg);
  white-space: nowrap;
}
.message p {
  margin: 0 0 28px;
}
.mini .message {
  padding: 7px 6px 0;
}
.mini .viewport .reply .editor {
  height: 400px;
}
.typo {
  text-decoration: underline wavy #e81123 1px;
  text-underline-offset: 2px;
}

/* scroll bars */
.vscroll {
  display: flex;
  flex: none;
  flex-direction: column;
  align-items: center;
  width: var(--scroll);
  padding: 5px 0;
  background: #fcfcfc;
  color: #8b8b8b;
}
.arrow {
  width: 15px;
  height: 15px;
}
.vscroll .arrow:first-child {
  transform: rotate(180deg);
}
.mini .vscroll .arrow {
  width: 8px;
  height: 8px;
}
.mini .vscroll {
  padding-top: 3px;
}
.vscroll .thumb {
  width: 13px;
  height: 105px;
  margin-top: 487px;
  margin-bottom: auto;
  border-radius: 7px;
  background: #8b8b8b;
}
.hscroll {
  display: flex;
  flex: none;
  align-items: center;
  gap: 9px;
  height: 22px;
  padding: 0 29px 0 4px;
  background: #fcfcfc;
  color: #8b8b8b;
}
.hscroll .left {
  transform: rotate(90deg);
}
.hscroll .right {
  transform: rotate(-90deg);
}
.hscroll .thumb {
  flex: 1;
  height: 13px;
  border-radius: 7px;
  background: #8b8b8b;
}

/* taskbar */
.taskbar {
  position: relative;
  display: flex;
  flex: none;
  align-items: center;
  height: 60px;
  background: linear-gradient(90deg, #1c1c21, #24262a 25%, #2b2f2d 40%, #3d3f35 62%, #454538 76%, #3b3d34 88%, #2e312d);
  color: #fff;
}
.task {
  width: 75px;
  height: 60px;
}
.task svg {
  width: 36px;
  height: 36px;
}
.task.start {
  width: 72px;
}
.task.start svg,
.task.small svg {
  width: 24px;
  height: 24px;
}
.task.running {
  background: linear-gradient(#e8f2b8, #e8f2b8) center bottom / 61px 3px no-repeat;
}
.bapp {
  width: 36px;
  height: 36px;
  background: linear-gradient(#0d70b5, #0d70b5) center 26px / 15px 6px no-repeat, #f6f6f6;
  color: #0b3d91;
  font-family: "Liberation Sans", sans-serif;
  font-size: 22px;
  font-weight: 700;
  line-height: 32px;
}
.weather {
  display: flex;
  align-items: center;
  gap: 13px;
  margin-left: auto;
  font-size: 20px;
}
.sun {
  position: relative;
}
.sun svg {
  width: 36px;
  height: 36px;
}
.sun b {
  position: absolute;
  top: 1px;
  right: 2px;
  width: 18px;
  height: 18px;
  border-radius: 50%;
  background: #c42b1c;
  font-size: 14px;
  font-weight: 400;
  line-height: 18px;
  text-align: center;
}
.tray {
  display: flex;
  margin-left: 28px;
}
.tray button {
  width: 36px;
}
.clock {
  display: flex;
  flex-direction: column;
  align-items: center;
  width: 112px;
  line-height: 28px;
}
.notif {
  width: 63px;
  height: 60px;
  margin-right: 18px;
}
.notif::after {
  content: "";
  position: absolute;
  right: 7px;
  width: 1px;
  height: 60px;
  background: #777;
}

/* windows lying over the page */
.dialog {
  position: absolute;
  top: 356px;
  left: 531px;
  width: 836px;
  border: 1px solid #6b6b6b;
  background: #fff;
  box-shadow: 0 4px 18px rgba(0, 0, 0, 0.35);
}
.dialog-title {
  display: flex;
  align-items: center;
  justify-content: space-between;
  height: 45px;
  padding: 0 11px;
}
.dialog-title button {
  width: 28px;
}
.dialog-title svg {
  width: 22px;
  height: 22px;
}
.dialog-body {
  display: flex;
  gap: 17px;
  height: 95px;
  padding: 16px 40px 0 17px;
}
.dialog-body svg {
  width: 44px;
  height: 44px;
}
.dialog-body p {
  margin: 7px 0 0;
  line-height: 25px;
}
.dialog-foot {
  display: flex;
  justify-content: flex-end;
  padding: 14px 16px 14px 15px;
  border-top: 1px solid #dfdfdf;
  background: #f0f0f0;
}
.dialog-foot button {
  width: 103px;
  height: 36px;
  border: 2px solid #0078d7;
  background: #e1e1e1;
}
.run-box {
  position: absolute;
  top: 345px;
  left: 10px;
  display: flex;
  align-items: center;
  gap: 4px;
  width: 296px;
  height: 150px;
  padding: 0 7px 126px;
  border: 1px solid #888;
  background: #fff;
  box-shadow: 0 1px 6px rgba(0, 0, 0, 0.35);
  color: #333;
  line-height: 16px;
}
.run-box button {
  margin-left: auto;
}
</style>
